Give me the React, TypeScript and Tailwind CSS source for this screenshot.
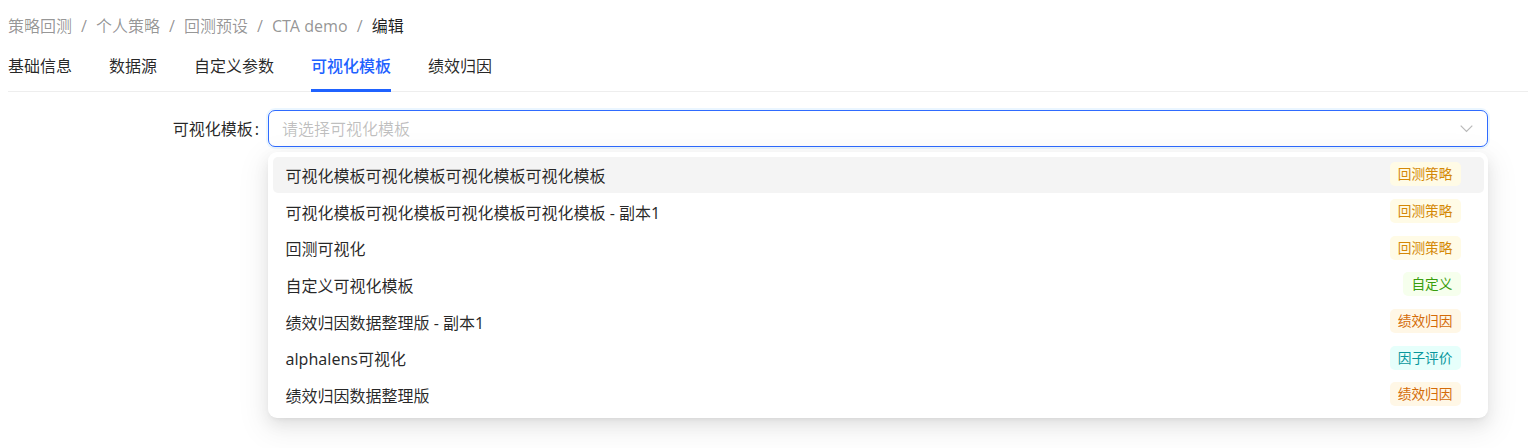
import React from "react";

type Opt = { label: string; tag: string; tone: "gold" | "green" | "orange" | "cyan" };

const options: Opt[] = [
  { label: "可视化模板可视化模板可视化模板可视化模板", tag: "回测策略", tone: "gold" },
  { label: "可视化模板可视化模板可视化模板可视化模板 - 副本1", tag: "回测策略", tone: "gold" },
  { label: "回测可视化", tag: "回测策略", tone: "gold" },
  { label: "自定义可视化模板", tag: "自定义", tone: "green" },
  { label: "绩效归因数据整理版 - 副本1", tag: "绩效归因", tone: "orange" },
  { label: "alphalens可视化", tag: "因子评价", tone: "cyan" },
  { label: "绩效归因数据整理版", tag: "绩效归因", tone: "orange" },
];

const toneClass: Record<Opt["tone"], string> = {
  gold: "text-[#d48806] bg-[#fffbe6]",
  green: "text-[#389e0d] bg-[#f6ffed]",
  orange: "text-[#d46b08] bg-[#fff7e6]",
  cyan: "text-[#08979c] bg-[#e6fffb]",
};

const crumbs = ["策略回测", "个人策略", "回测预设", "CTA demo"];
const tabs = ["基础信息", "数据源", "自定义参数", "可视化模板", "绩效归因"];

export default function App() {
  return (
    <div
      className="w-[1530px] h-[448px] bg-white overflow-hidden text-[16px] text-[rgba(0,0,0,0.85)]"
      style={{ fontFamily: '"Segoe UI", "Noto Sans", "Noto Sans CJK SC", sans-serif' }}
    >
      <div className="pl-[8px] pr-[2px]">
        {/* Breadcrumb */}
        <div className="flex items-center pt-[15px] h-[38px] leading-[23px]">
          {crumbs.map((c) => (
            <React.Fragment key={c}>
              <span className="text-[rgba(0,0,0,0.42)]">{c}</span>
              <span className="mx-[9px] text-[rgba(0,0,0,0.42)]">/</span>
            </React.Fragment>
          ))}
          <span className="text-[rgba(0,0,0,0.88)]">编辑</span>
        </div>

        {/* Tabs */}
        <div className="flex items-stretch h-[53px] border-b border-[#eeeeee] mt-[1px]">
          {tabs.map((t, i) => {
            const active = i === 3;
            return (
              <div
                key={t}
                className={`relative flex items-center pt-[2px] leading-[25px] ${i > 0 ? "ml-[37px]" : ""} ${
                  active ? "text-[#1f62ff] font-medium" : ""
                }`}
              >
                {t}
                {active && <div className="absolute left-0 right-0 bottom-[-1px] h-[3px] bg-[#1f62ff]" />}
              </div>
            );
          })}
        </div>

        {/* Form row */}
        <div className="flex items-start mt-[18px]">
          <div className="w-[260px] h-[37px] flex items-center justify-end">
            <span>可视化模板</span>
            <span className="ml-[2px] mr-[9px]">:</span>
          </div>
          <div className="relative w-[1220px]">
            <div className="h-[37px] rounded-[7px] border border-[#2f6bff] shadow-[0_0_0_2px_rgba(5,145,255,0.08)] flex items-center pl-[13px] pr-[14px] bg-white">
              <span className="flex-1 text-[rgba(0,0,0,0.25)]">请选择可视化模板</span>
              <svg width="13" height="8" viewBox="0 0 13 8" fill="none">
                <path d="M0.7 0.7 L6.5 6.5 L12.3 0.7" stroke="rgba(0,0,0,0.28)" strokeWidth="1.2" />
              </svg>
            </div>
            <div className="absolute left-0 top-[42px] w-full bg-white rounded-[9px] p-[4.5px] shadow-[0_6px_16px_0_rgba(0,0,0,0.08),0_3px_6px_-4px_rgba(0,0,0,0.12),0_9px_28px_8px_rgba(0,0,0,0.05)]">
              {options.map((o, i) => (
                <div
                  key={o.label}
                  className={`h-[36.7px] flex items-center pt-[2px] pl-[13px] pr-[23px] rounded-[5px] ${
                    i === 0 ? "bg-[#f4f4f4]" : ""
                  }`}
                >
                  <span className="flex-1">{o.label}</span>
                  <span
                    className={`h-[24px] -mt-[3px] px-[8px] rounded-[5px] text-[13.7px] leading-[24px] ${toneClass[o.tone]}`}
                  >
                    {o.tag}
                  </span>
                </div>
              ))}
            </div>
          </div>
        </div>
      </div>
    </div>
  );
}
